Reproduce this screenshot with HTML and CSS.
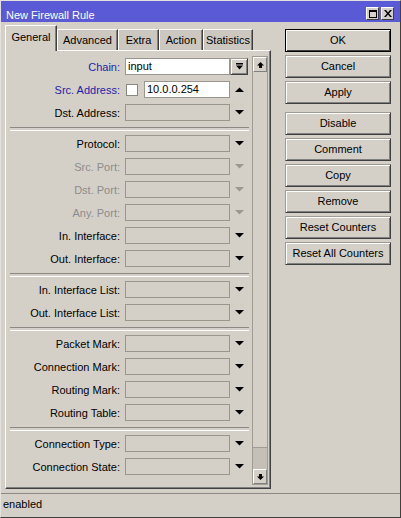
FILE: index.html
```html
<!DOCTYPE html>
<html>
<head>
<meta charset="utf-8">
<title>New Firewall Rule</title>
<link rel="stylesheet" href="styles.css">
</head>
<body>
<div class="window">
  <div class="titlebar">
    <span class="title">New Firewall Rule</span>
    <div class="tbtns">
      <span class="tbtn"><svg width="8" height="8" viewBox="0 0 8 8"><path fill-rule="evenodd" d="M0 0h8v8H0z M1 2v5h6V2z"/></svg></span>
      <span class="tbtn"><svg width="8" height="7" viewBox="0 0 8 7"><path d="M0 0h2l2 2.4 2-2.4h2L5 3.5 8 7H6L4 4.6 2 7H0l3-3.5z"/></svg></span>
    </div>
  </div>
  <div class="main">
    <div class="left">
      <div class="tabs">
        <div class="tab active t-general">General</div>
        <div class="tab t-advanced">Advanced</div>
        <div class="tab t-extra">Extra</div>
        <div class="tab t-action">Action</div>
        <div class="tab t-stats">Statistics</div>
      </div>
      <div class="panel">
        <div class="form">
          <div class="row">
            <span class="lbl blue">Chain:</span>
            <span class="field white">input</span>
            <span class="ddbtn"><svg width="7" height="7" viewBox="0 0 7 7"><path d="M0 0h7v1.5H0z M0 2.5h7L3.5 6.5z"/></svg></span>
          </div>
          <div class="row">
            <span class="lbl blue">Src. Address:</span>
            <span class="check"></span>
            <span class="field white short">10.0.0.254</span>
            <span class="dd"><svg width="9" height="5" viewBox="0 0 9 5"><path d="M0 5h9L4.5 0.5z"/></svg></span>
          </div>
          <div class="row">
            <span class="lbl">Dst. Address:</span>
            <span class="field"></span>
            <span class="dd"><svg width="9" height="5" viewBox="0 0 9 5"><path d="M0 0h9L4.5 4.5z"/></svg></span>
          </div>
          <div class="sep"></div>
          <div class="row">
            <span class="lbl">Protocol:</span>
            <span class="field"></span>
            <span class="dd"><svg width="9" height="5" viewBox="0 0 9 5"><path d="M0 0h9L4.5 4.5z"/></svg></span>
          </div>
          <div class="row">
            <span class="lbl dis">Src. Port:</span>
            <span class="field"></span>
            <span class="dd dis"><svg width="9" height="5" viewBox="0 0 9 5"><path d="M0 0h9L4.5 4.5z"/></svg></span>
          </div>
          <div class="row">
            <span class="lbl dis">Dst. Port:</span>
            <span class="field"></span>
            <span class="dd dis"><svg width="9" height="5" viewBox="0 0 9 5"><path d="M0 0h9L4.5 4.5z"/></svg></span>
          </div>
          <div class="row">
            <span class="lbl dis">Any. Port:</span>
            <span class="field"></span>
            <span class="dd dis"><svg width="9" height="5" viewBox="0 0 9 5"><path d="M0 0h9L4.5 4.5z"/></svg></span>
          </div>
          <div class="row">
            <span class="lbl">In. Interface:</span>
            <span class="field"></span>
            <span class="dd"><svg width="9" height="5" viewBox="0 0 9 5"><path d="M0 0h9L4.5 4.5z"/></svg></span>
          </div>
          <div class="row">
            <span class="lbl">Out. Interface:</span>
            <span class="field"></span>
            <span class="dd"><svg width="9" height="5" viewBox="0 0 9 5"><path d="M0 0h9L4.5 4.5z"/></svg></span>
          </div>
          <div class="sep"></div>
          <div class="row">
            <span class="lbl">In. Interface List:</span>
            <span class="field"></span>
            <span class="dd"><svg width="9" height="5" viewBox="0 0 9 5"><path d="M0 0h9L4.5 4.5z"/></svg></span>
          </div>
          <div class="row">
            <span class="lbl">Out. Interface List:</span>
            <span class="field"></span>
            <span class="dd"><svg width="9" height="5" viewBox="0 0 9 5"><path d="M0 0h9L4.5 4.5z"/></svg></span>
          </div>
          <div class="sep"></div>
          <div class="row">
            <span class="lbl">Packet Mark:</span>
            <span class="field"></span>
            <span class="dd"><svg width="9" height="5" viewBox="0 0 9 5"><path d="M0 0h9L4.5 4.5z"/></svg></span>
          </div>
          <div class="row">
            <span class="lbl">Connection Mark:</span>
            <span class="field"></span>
            <span class="dd"><svg width="9" height="5" viewBox="0 0 9 5"><path d="M0 0h9L4.5 4.5z"/></svg></span>
          </div>
          <div class="row">
            <span class="lbl">Routing Mark:</span>
            <span class="field"></span>
            <span class="dd"><svg width="9" height="5" viewBox="0 0 9 5"><path d="M0 0h9L4.5 4.5z"/></svg></span>
          </div>
          <div class="row">
            <span class="lbl">Routing Table:</span>
            <span class="field"></span>
            <span class="dd"><svg width="9" height="5" viewBox="0 0 9 5"><path d="M0 0h9L4.5 4.5z"/></svg></span>
          </div>
          <div class="sep"></div>
          <div class="row">
            <span class="lbl">Connection Type:</span>
            <span class="field"></span>
            <span class="dd"><svg width="9" height="5" viewBox="0 0 9 5"><path d="M0 0h9L4.5 4.5z"/></svg></span>
          </div>
          <div class="row">
            <span class="lbl">Connection State:</span>
            <span class="field"></span>
            <span class="dd"><svg width="9" height="5" viewBox="0 0 9 5"><path d="M0 0h9L4.5 4.5z"/></svg></span>
          </div>
        </div>
        <div class="scroll">
          <span class="sbtn"><svg width="7" height="6" viewBox="0 0 7 6"><path d="M3.5 0L7 3.5H0z M2 3.5h3V6H2z"/></svg></span>
          <span class="track"></span>
          <span class="thumb"></span>
          <span class="sbtn"><svg width="7" height="6" viewBox="0 0 7 6"><path d="M3.5 6L7 2.5H0z M2 0h3v2.5H2z"/></svg></span>
        </div>
      </div>
    </div>
    <div class="buttons">
      <div class="btn default">OK</div>
      <div class="btn">Cancel</div>
      <div class="btn">Apply</div>
      <div class="btn group">Disable</div>
      <div class="btn">Comment</div>
      <div class="btn">Copy</div>
      <div class="btn">Remove</div>
      <div class="btn">Reset Counters</div>
      <div class="btn">Reset All Counters</div>
    </div>
  </div>
  <div class="status">enabled</div>
</div>
</body>
</html>
```
FILE: styles.css
```css
* { box-sizing: border-box; }
body {
  margin: 0;
  background: #d4d0c8;
  font-family: "Liberation Sans", Arial, sans-serif;
  font-size: 11px;
  color: #000;
}
.window {
  width: 401px;
  height: 518px;
  background: #d4d0c8;
  border-top: 1px solid #e4e2de;
  border-left: 1px solid #e4e2de;
  border-right: 1px solid #404040;
  border-bottom: 1px solid #404040;
  display: flex;
  flex-direction: column;
  overflow: hidden;
}
.titlebar {
  height: 21px;
  flex: none;
  background: #5a5ad6;
  color: #fff;
  display: flex;
  justify-content: space-between;
  padding: 0 6px 0 5px;
}
.title {
  align-self: flex-start;
  margin-top: 8px;
  line-height: 13px;
  white-space: nowrap;
}
.tbtns {
  align-self: flex-start;
  margin-top: 6px;
  display: flex;
  gap: 2px;
}
.tbtn {
  width: 13px;
  height: 13px;
  background: #d4d0c8;
  border: 1px solid;
  border-color: #fff #404040 #404040 #fff;
  display: flex;
  align-items: center;
  justify-content: center;
}
.tbtn svg { fill: #000; }
.main {
  flex: none;
  height: 467px;
  display: flex;
  padding: 3px 0 0 4px;
}
.left {
  width: 266px;
  display: flex;
  flex-direction: column;
}
.tabs {
  height: 25px;
  display: flex;
  align-items: flex-end;
}
.tab {
  height: 21px;
  line-height: 20px;
  text-align: center;
  white-space: nowrap;
  border-top: 1px solid #fff;
  border-left: 1px solid #fff;
  border-right: 1px solid #404040;
  box-shadow: inset -1px 0 #808080;
  background: #ccc8c0;
}
.tab.active {
  height: 26px;
  line-height: 23px;
  margin-bottom: -1px;
  position: relative;
  z-index: 1;
  background: #d4d0c8;
}
.t-general { width: 52px; }
.t-advanced { width: 61px; }
.t-extra { width: 41px; }
.t-action { width: 44px; }
.t-stats { width: 50px; }
.panel {
  height: 439px;
  border-top: 1px solid #fff;
  border-left: 1px solid #fff;
  border-right: 1px solid #404040;
  border-bottom: 1px solid #404040;
  box-shadow: inset -1px -1px #808080;
  display: flex;
  padding-right: 2px;
}
.form {
  width: 246px;
  padding-top: 4px;
}
.row {
  height: 23px;
  display: flex;
  align-items: center;
}
.lbl {
  width: 114px;
  text-align: right;
  white-space: nowrap;
}
.lbl.blue { color: #1e1ea8; }
.lbl.dis { color: #8c8c8c; }
.field {
  width: 105px;
  height: 17px;
  margin-left: 5px;
  border: 1px solid #9a968e;
  background: #d4d0c8;
  padding-left: 2px;
  line-height: 15px;
  white-space: nowrap;
}
.field.white { background: #fff; }
.field.short { width: 86px; margin-left: 6px; }
.check {
  width: 12px;
  height: 12px;
  margin-left: 6px;
  background: #fff;
  border: 1px solid #8a8680;
}
.dd {
  width: 19px;
  height: 17px;
  display: flex;
  align-items: center;
  justify-content: center;
}
.dd svg { fill: #000; }
.dd.dis svg { fill: #9c9890; }
.ddbtn {
  width: 18px;
  height: 17px;
  border: 1px solid;
  border-color: #a09c94 #404040 #404040 #a09c94;
  box-shadow: inset 1px 1px #fff, inset -1px -1px #808080;
  display: flex;
  align-items: center;
  justify-content: center;
}
.ddbtn svg { fill: #000; }
.sep {
  height: 8px;
  margin: 0 3px 0 4px;
  padding-top: 3px;
}
.sep::before {
  content: "";
  display: block;
  height: 2px;
  border-top: 1px solid #8c8984;
  border-bottom: 1px solid #fff;
}
.scroll {
  width: 16px;
  margin: 5px 0 3px;
  border: 1px solid #a09c94;
  display: flex;
  flex-direction: column;
}
.sbtn {
  height: 15px;
  flex: none;
  background: #d4d0c8;
  border: 1px solid;
  border-color: #fff #808080 #808080 #fff;
  display: flex;
  align-items: center;
  justify-content: center;
}
.sbtn svg { fill: #000; }
.track {
  flex: 1;
  background: #d4d0c8;
}
.thumb {
  height: 22px;
  flex: none;
  background: #c4c0b8;
  border-top: 1px solid #a09c94;
}
.buttons {
  width: 106px;
  margin: 4px 0 0 14px;
  display: flex;
  flex-direction: column;
  gap: 3px;
}
.btn {
  height: 23px;
  flex: none;
  text-align: center;
  line-height: 21px;
  white-space: nowrap;
  border: 1px solid;
  border-color: #a09c94 #404040 #404040 #a09c94;
  box-shadow: inset 1px 1px #fff, inset -1px -1px #808080;
}
.btn.default {
  border-color: #000;
  box-shadow: inset 1px 1px #fff, inset -1px -1px #404040;
}
.btn.group { margin-top: 5px; }
.status {
  height: 24px;
  flex: none;
  margin-top: 4px;
  border-top: 1px solid #8c8984;
  padding-left: 2px;
  line-height: 21px;
}
```
